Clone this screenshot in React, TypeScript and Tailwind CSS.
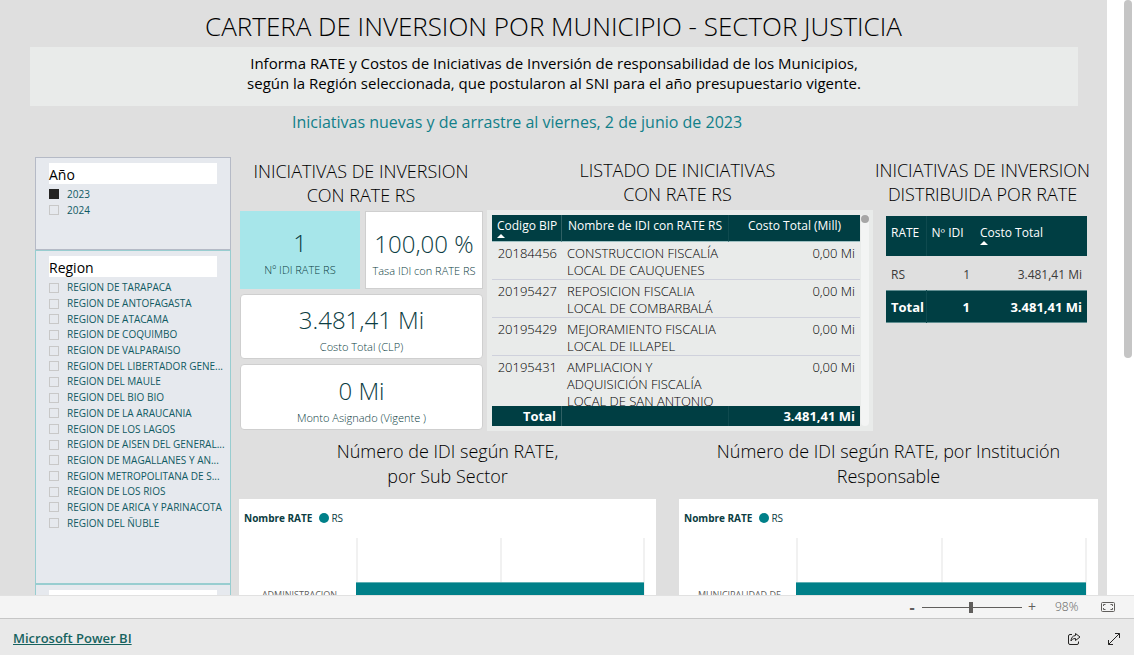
import React, { useState } from 'react';

interface Initiative {
  code: string;
  name: string[];
  cost: string;
}

const years = ['2023', '2024'];

const regions = [
  'REGION DE TARAPACA',
  'REGION DE ANTOFAGASTA',
  'REGION DE ATACAMA',
  'REGION DE COQUIMBO',
  'REGION DE VALPARAISO',
  'REGION DEL LIBERTADOR GENE...',
  'REGION DEL MAULE',
  'REGION DEL BIO BIO',
  'REGION DE LA ARAUCANIA',
  'REGION DE LOS LAGOS',
  'REGION DE AISEN DEL GENERAL...',
  'REGION DE MAGALLANES Y AN...',
  'REGION METROPOLITANA DE S...',
  'REGION DE LOS RIOS',
  'REGION DE ARICA Y PARINACOTA',
  'REGION DEL ÑUBLE',
];

const initiatives: Initiative[] = [
  { code: '20184456', name: ['CONSTRUCCION FISCALÍA', 'LOCAL DE CAUQUENES'], cost: '0,00 Mi' },
  { code: '20195427', name: ['REPOSICION FISCALIA', 'LOCAL DE COMBARBALÁ'], cost: '0,00 Mi' },
  { code: '20195429', name: ['MEJORAMIENTO FISCALIA', 'LOCAL DE ILLAPEL'], cost: '0,00 Mi' },
  {
    code: '20195431',
    name: ['AMPLIACION Y', 'ADQUISICIÓN FISCALÍA', 'LOCAL DE SAN ANTONIO'],
    cost: '0,00 Mi',
  },
];

const SortArrow = () => (
  <svg viewBox="0 0 8 4" className="block h-1 w-2" fill="currentColor" aria-hidden="true">
    <path d="M0 4 L4 0 L8 4 Z" />
  </svg>
);

interface CheckItemProps {
  label: string;
  checked: boolean;
  onChange: () => void;
}

const CheckItem: React.FC<CheckItemProps> = ({ label, checked, onChange }) => (
  <label className="flex h-4 items-center gap-2 whitespace-nowrap text-[10px] text-[#0f5a63]">
    <input
      type="checkbox"
      checked={checked}
      onChange={onChange}
      className="size-[10px] shrink-0 appearance-none border border-[#c8c8c8] checked:border-[#252423] checked:bg-[#252423]"
    />
    {label}
  </label>
);

const SlicerTitle = ({ children }: { children?: React.ReactNode }) => (
  <h3 className="mr-[13px] h-[21px] bg-white text-sm leading-[23px] text-black">{children}</h3>
);

interface KpiProps {
  value: string;
  label: string;
  className?: string;
}

const Kpi: React.FC<KpiProps> = ({ value, label, className = '' }) => (
  <div
    className={`flex flex-col items-center justify-end overflow-hidden whitespace-nowrap font-light text-[#0b3c42] ${className}`}
  >
    <p className="text-2xl leading-8">{value}</p>
    <p className="text-[11px] leading-[22px]">{label}</p>
  </div>
);

const SectionTitle = ({ lines }: { lines: string[] }) => (
  <h2 className="whitespace-nowrap text-center text-lg font-light leading-6 text-black">
    {lines.map((line) => (
      <span key={line} className="block">
        {line}
      </span>
    ))}
  </h2>
);

interface ChartProps {
  title: string[];
  category: string;
}

const Chart: React.FC<ChartProps> = ({ title, category }) => (
  <section className="min-w-0 text-[#252423]">
    <h2 className="whitespace-nowrap text-center text-lg font-light leading-[25px] text-black">
      {title.map((line) => (
        <span key={line} className="block">
          {line}
        </span>
      ))}
    </h2>
    <div className="mt-[10px] bg-white pt-3">
      <div className="flex h-[14px] items-center pl-[5px] text-[10px] text-[#0b3c42]">
        <span className="font-bold">Nombre RATE</span>
        <span className="ml-[7px] mr-[2px] size-[10px] rounded-full bg-[#008089]" />
        <span>RS</span>
      </div>
      <div className="mt-[13px] flex">
        <p className="mt-[50px] w-[117px] pl-1 text-center text-[9px] leading-[14px] text-[#605e5c]">
          {category}
        </p>
        <div className="relative mr-[11px] flex h-44 flex-1 justify-between">
          <span className="w-[2px] bg-[#f1f1f1]" />
          <span className="w-[2px] bg-[#f1f1f1]" />
          <span className="w-[2px] bg-[#f1f1f1]" />
          <span className="absolute left-0 right-px top-11 h-24 border-t border-[#5fb0b4] bg-[#008089]" />
        </div>
      </div>
    </div>
  </section>
);

const InitiativeTable = () => (
  <div className="flex bg-[#e9ebea] py-[5px] pl-[5px] pr-1">
    <div className="h-[211px] flex-1 overflow-hidden">
      <table className="w-full table-fixed border-separate border-spacing-0 text-xs leading-[17px] text-[#252423]">
        <colgroup>
          <col className="w-[70px]" />
          <col className="w-[167px]" />
          <col />
        </colgroup>
        <thead className="sticky top-0 bg-[#003e43] text-white">
          <tr className="h-[27px] align-top">
            <th className="whitespace-nowrap border-b border-r border-b-[#9fc0c2] border-r-[#2f6064] px-[5px] pt-[2px] font-normal">
              Codigo BIP
              <SortArrow />
            </th>
            <th className="whitespace-nowrap border-b border-r border-b-[#9fc0c2] border-r-[#0f4a4f] pt-[2px] font-normal">
              Nombre de IDI con RATE RS
            </th>
            <th className="whitespace-nowrap border-b border-b-[#9fc0c2] pt-[2px] font-normal">
              Costo Total (Mill)
            </th>
          </tr>
        </thead>
        <tbody className="text-[13px] font-light text-black">
          {initiatives.map((item) => (
            <tr key={item.code} className="align-top">
              <td className="border-b border-[#cfd1dc] pr-[5px] pt-[3px] text-right">{item.code}</td>
              <td className="whitespace-nowrap border-b border-[#cfd1dc] pl-[5px] pt-[3px]">
                {item.name.map((line) => (
                  <span key={line} className="block">
                    {line}
                  </span>
                ))}
              </td>
              <td className="border-b border-[#cfd1dc] pr-[5px] pt-[3px] text-right">{item.cost}</td>
            </tr>
          ))}
        </tbody>
        <tfoot className="sticky bottom-0 bg-[#003e43] text-[13px] font-bold text-white">
          <tr className="h-5">
            <td className="border-r border-[#2f6064] pr-[5px] pt-px text-right">Total</td>
            <td className="border-r border-[#0f4a4f]" />
            <td className="pr-[5px] pt-px text-right">3.481,41 Mi</td>
          </tr>
        </tfoot>
      </table>
    </div>
    <div className="ml-px w-2 rounded-b bg-[#f3f4f4]">
      <div className="size-2 rounded-full bg-[#a6a6a6]" />
    </div>
  </div>
);

const RateTable = () => (
  <table className="w-full border-collapse text-xs leading-4 text-[#3b3a39]">
    <thead className="bg-[#003e43] text-white">
      <tr className="h-10 whitespace-nowrap text-left align-top">
        <th className="w-10 border-r border-[#0f4a4f] pl-[5px] pt-[9px] font-normal">RATE</th>
        <th className="w-12 pl-[5px] pt-[9px] font-normal">Nº IDI</th>
        <th className="pl-[6px] pt-[9px] font-normal">
          Costo Total
          <SortArrow />
        </th>
      </tr>
    </thead>
    <tbody>
      <tr className="h-[34px] border-b border-[#5f8d90]">
        <td className="pl-[5px] pt-1">RS</td>
        <td className="pr-1 pt-1 text-right">1</td>
        <td className="pr-[5px] pt-1 text-right">3.481,41 Mi</td>
      </tr>
    </tbody>
    <tfoot className="bg-[#003e43] text-[13px] font-bold text-white">
      <tr className="h-8 border-b border-[#5f8d90]">
        <td className="border-r border-[#0f4a4f] pl-[5px] pt-[2px]">Total</td>
        <td className="pr-1 pt-[2px] text-right">1</td>
        <td className="pr-[5px] pt-[2px] text-right">3.481,41 Mi</td>
      </tr>
    </tfoot>
  </table>
);

export default function App() {
  const [selected, setSelected] = useState<string[]>(['2023']);
  const [zoom, setZoom] = useState(98);

  const toggle = (label: string) =>
    setSelected((prev) =>
      prev.includes(label) ? prev.filter((item) => item !== label) : [...prev, label],
    );

  return (
    <div className="flex h-screen flex-col overflow-hidden font-['Open_Sans','Noto_Sans',sans-serif]">
      <div className="flex min-h-0 flex-1 bg-white">
        <main className="min-w-0 flex-1 overflow-hidden bg-[#dfdfdf]">
          <h1 className="pb-[3px] pt-2 text-center text-[26px] font-light leading-9 text-black">
            CARTERA DE INVERSION POR MUNICIPIO - SECTOR JUSTICIA
          </h1>
          <div className="ml-[30px] mr-[29px] h-[59px] bg-[#e9ebea] pt-[6px] text-center text-[15px] leading-5 text-black">
            <p>Informa RATE y Costos de Iniciativas de Inversión de responsabilidad de los Municipios,</p>
            <p>según la Región seleccionada, que postularon al SNI para el año presupuestario vigente.</p>
          </div>
          <p className="mt-1 pr-[73px] text-center text-base leading-6 text-[#11808a]">
            Iniciativas nuevas y de arrastre al viernes, 2 de junio de 2023
          </p>

          <div className="mt-[23px] flex gap-2 pl-[35px] pr-[9px]">
            <aside className="w-[196px] shrink-0">
              <section className="h-[93px] border border-[#b5bac6] bg-[#e6e9ee] pl-[13px] pt-[5px]">
                <SlicerTitle>Año</SlicerTitle>
                <div className="mt-[2px]">
                  {years.map((year) => (
                    <CheckItem
                      key={year}
                      label={year}
                      checked={selected.includes(year)}
                      onChange={() => toggle(year)}
                    />
                  ))}
                </div>
              </section>
              <section className="h-[335px] border border-b-2 border-[#98cdd0] bg-[#e6e9ee] pl-[13px] pt-[5px]">
                <SlicerTitle>Region</SlicerTitle>
                <div className="mt-[3px] flex h-[251px] flex-col justify-between">
                  {regions.map((region) => (
                    <CheckItem
                      key={region}
                      label={region}
                      checked={selected.includes(region)}
                      onChange={() => toggle(region)}
                    />
                  ))}
                </div>
              </section>
              <section className="h-24 border-x border-[#98cdd0] bg-[#e6e9ee] pl-[13px] pt-[5px]">
                <SlicerTitle />
              </section>
            </aside>

            <div className="min-w-0 flex-1">
              <div className="grid grid-cols-[244fr_390fr_225fr]">
                <section className="min-w-0 pt-[2px]">
                  <SectionTitle lines={['INICIATIVAS DE INVERSION', 'CON RATE RS']} />
                  <div className="mt-1 flex flex-col gap-[5px] pl-px">
                    <div className="flex h-[78px] gap-[5px]">
                      <Kpi
                        value="1"
                        label="Nº IDI RATE RS"
                        className="flex-1 bg-[#a7e6ea] pb-2"
                      />
                      <Kpi
                        value="100,00 %"
                        label="Tasa IDI con RATE RS"
                        className="w-[118px] border border-[#cfcfcf] bg-white pb-[6px]"
                      />
                    </div>
                    <Kpi
                      value="3.481,41 Mi"
                      label="Costo Total (CLP)"
                      className="h-[65px] rounded-sm border border-[#cfcfcf] bg-white"
                    />
                    <Kpi
                      value="0 Mi"
                      label="Monto Asignado (Vigente )"
                      className="h-[66px] rounded-sm border border-[#cfcfcf] bg-white"
                    />
                  </div>
                </section>
                <section className="min-w-0 pl-1 pt-px">
                  <div className="pr-[5px]">
                    <SectionTitle lines={['LISTADO DE INICIATIVAS', 'CON RATE RS']} />
                  </div>
                  <div className="mt-1">
                    <InitiativeTable />
                  </div>
                </section>
                <section className="min-w-0 pt-px">
                  <div className="pr-[6px]">
                    <SectionTitle lines={['INICIATIVAS DE INVERSION', 'DISTRIBUIDA POR RATE']} />
                  </div>
                  <div className="mt-[10px] pl-[13px] pr-[11px]">
                    <RateTable />
                  </div>
                </section>
              </div>

              <div className="mt-2 grid grid-cols-[417fr_419fr] gap-[23px]">
                <Chart title={['Número de IDI según RATE,', 'por Sub Sector']} category="ADMINISTRACION" />
                <Chart
                  title={['Número de IDI según RATE, por Institución', 'Responsable']}
                  category="MUNICIPALIDAD DE"
                />
              </div>
            </div>
          </div>
        </main>
        <div className="w-[27px] pl-[17px]">
          <div className="h-[358px] w-2 rounded-full bg-[#c5c5c5]" />
        </div>
      </div>

      <div className="flex h-[23px] shrink-0 items-center justify-end border-t border-[#e1e1e1] bg-[#f4f4f4] pr-[19px] text-xs text-[#605e5c]">
        <button type="button" aria-label="Alejar" className="w-3 text-center text-base font-bold leading-4">
          -
        </button>
        <input
          type="range"
          aria-label="Zoom"
          min={0}
          max={200}
          value={zoom}
          onChange={(e) => setZoom(Number(e.target.value))}
          className="mx-1 h-3 w-[100px] appearance-none bg-transparent [&::-webkit-slider-runnable-track]:h-px [&::-webkit-slider-runnable-track]:bg-[#605e5c] [&::-webkit-slider-thumb]:-mt-[5px] [&::-webkit-slider-thumb]:h-[11px] [&::-webkit-slider-thumb]:w-1 [&::-webkit-slider-thumb]:appearance-none [&::-webkit-slider-thumb]:bg-[#605e5c]"
        />
        <button type="button" aria-label="Acercar" className="w-3 text-center text-sm leading-4">
          +
        </button>
        <span className="ml-[17px] w-[46px] text-xs font-light">{zoom}%</span>
        <button type="button" aria-label="Ajustar a la página">
          <svg viewBox="0 0 14 10" className="h-[10px] w-[14px]" fill="none" stroke="currentColor">
            <rect x="0.5" y="0.5" width="13" height="9" rx="1" />
            <path d="M2.500 4V2.500H4.500 M9.500 2.500H11.500V4 M11.500 6V7.500H9.500 M4.500 7.500H2.500V6" />
          </svg>
        </button>
      </div>

      <footer className="flex h-[37px] shrink-0 items-center border-t border-[#c6c6c6] bg-[#e9e9e9] px-[13px] pt-1 text-[#252423]">
        <a href="#" className="text-[13px] font-semibold text-[#17635f] underline">
          Microsoft Power BI
        </a>
        <button type="button" aria-label="Compartir" className="ml-auto">
          <svg viewBox="0 0 14 14" className="size-[14px]" fill="none" stroke="currentColor" strokeLinejoin="round">
            <path d="M5 2.500H3A1.500 1.500 0 0 0 1.500 4V11A1.500 1.500 0 0 0 3 12.500H10A1.500 1.500 0 0 0 11.500 11V9.500" />
            <path d="M8.500 1.500L13 5L8.500 8.500V6.500C6 6.500 4.800 7.500 4 9C4 6 5.500 3.800 8.500 3.500Z" />
          </svg>
        </button>
        <button type="button" aria-label="Pantalla completa" className="ml-[26px]">
          <svg viewBox="0 0 14 14" className="size-[14px]" fill="none" stroke="currentColor">
            <path d="M1.500 12.500L12.500 1.500 M8 1.500H12.500V6 M1.500 8V12.500H6" />
          </svg>
        </button>
      </footer>
    </div>
  );
}
